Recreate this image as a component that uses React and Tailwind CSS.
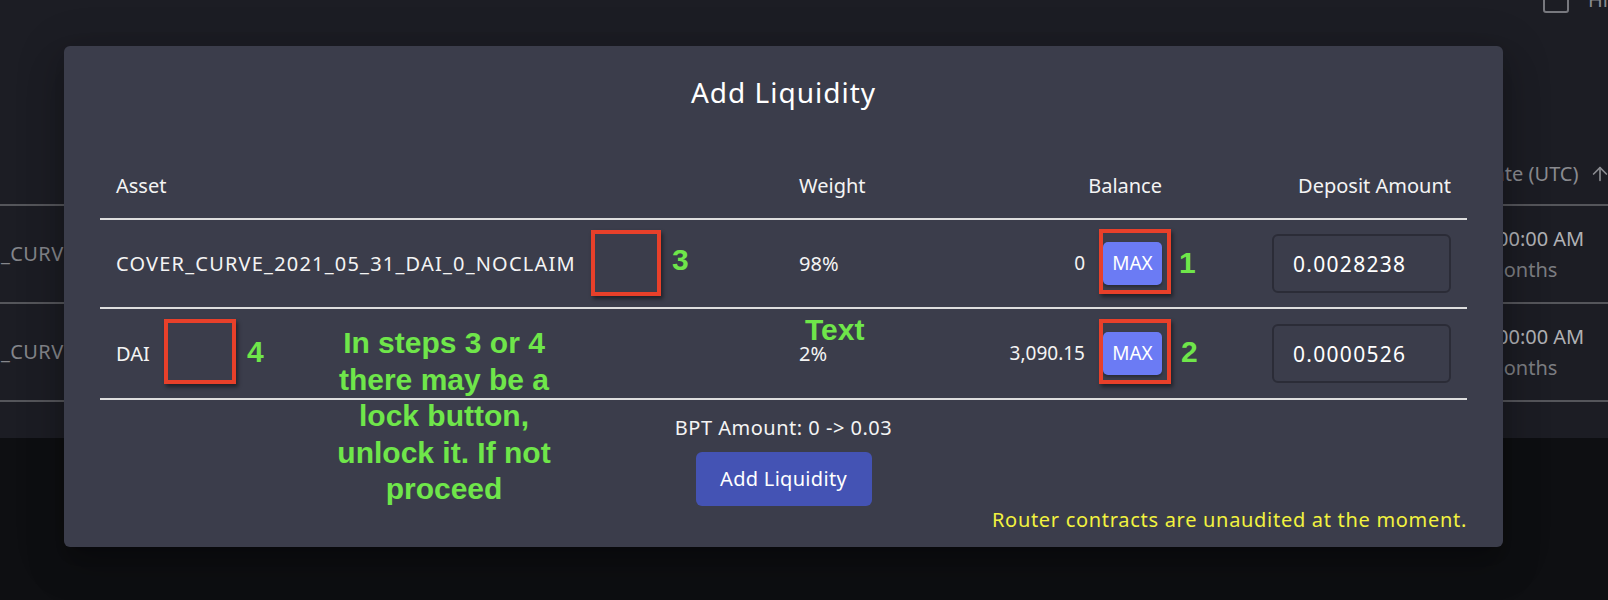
import React from 'react';
import { ArrowUp } from 'lucide-react';

const rows = [
  { asset: 'COVER_CURVE_2021_05_31_DAI_0_NOCLAIM', weight: '98%', balance: '0', amount: '0.0028238', h: 'h-[89px]', wide: true },
  { asset: 'DAI', weight: '2%', balance: '3,090.15', amount: '0.0000526', h: 'h-[91px]' },
];

const bgRows = ['_CURV', '_CURV'];

function Background() {
  return (
    <div className="h-[438px] bg-[#1c1d24]">
      <div className="flex h-[204px] flex-col">
        <div className="-mt-[13px] flex items-center justify-end gap-[19px]">
          <div className="h-[26px] w-[26px] rounded-[3px] border-2 border-[#77787e]" />
          <span className="w-[20px] overflow-hidden whitespace-nowrap text-[20px] leading-[26px] text-[#8a8b90]">Hide</span>
        </div>
        <div className="mt-auto grid grid-cols-[1479px_1fr] pb-[16px] text-[20px] leading-[28px] text-[#8a8b90]">
          <div />
          <div className="flex items-center gap-[10px] whitespace-nowrap">
            Date (UTC)
            <ArrowUp size={22} strokeWidth={1.8} />
          </div>
        </div>
      </div>
      {bgRows.map((r, i) => (
        <div key={i} className="grid h-[98px] grid-cols-[1479px_1fr] items-center border-t-2 border-[#55565b]">
          <div className="whitespace-nowrap pl-[1px] text-[20px] tracking-[0.4px] text-[#85868b]">{r}</div>
          <div className="text-[20px] leading-[31px] whitespace-nowrap">
            <div className="pl-[18px] text-[#b0b1b5]">00:00 AM</div>
            <div className="pl-[6px] text-[#7c7d82]">months</div>
          </div>
        </div>
      ))}
      <div className="border-t-2 border-[#55565b]" />
    </div>
  );
}

function Modal() {
  return (
    <div className="absolute left-[64px] top-[46px] flex h-[501px] w-[1439px] flex-col rounded-[6px] bg-[#3b3d4b] px-[36px] pt-[29px] text-[#f4f4f4] shadow-[0_11px_15px_-7px_rgba(0,0,0,0.2),0_24px_38px_3px_rgba(0,0,0,0.14),0_9px_46px_8px_rgba(0,0,0,0.12)]">
      <h2 className="h-[34px] text-center text-[28px] leading-[34px] tracking-[1px] text-white">Add Liquidity</h2>

      <div className="grid h-[111px] grid-cols-[683px_200px_195px_289px] items-end border-b-2 border-[#dedede] pb-[18px] text-[20px] leading-[28px]">
        <div className="pl-4">Asset</div>
        <div className="pl-4">Weight</div>
        <div className="pr-4 text-right">Balance</div>
        <div className="pr-4 text-right">Deposit Amount</div>
      </div>

      {rows.map((r) => (
        <div key={r.asset} className={`grid ${r.h} grid-cols-[683px_200px_195px_289px] items-center border-b-2 border-[#dedede] text-[20px]`}>
          <div className={`pl-4 whitespace-nowrap ${r.wide ? 'tracking-[1.2px]' : ''}`}>{r.asset}</div>
          <div className="pl-4">{r.weight}</div>
          <div className="flex items-center justify-end gap-[18px] pr-4">
            <span className="text-[19px]">{r.balance}</span>
            <button className="h-[43px] w-[59px] rounded-[5px] bg-[#6b7bf4] text-[19px] text-white shadow-[0_2px_3px_rgba(0,0,0,0.3)]">MAX</button>
          </div>
          <div className="flex justify-end pr-4">
            <input
              readOnly
              value={r.amount}
              className="h-[59px] w-[179px] rounded-[6px] border-2 border-[#2b2c37] bg-transparent pl-[19px] text-[21px] tracking-[1.3px] text-white outline-none"
            />
          </div>
        </div>
      ))}

      <p className="mt-[14px] text-center text-[20px] leading-[28px] tracking-[0.5px]">BPT Amount: 0 -&gt; 0.03</p>
      <button className="mx-auto mt-[10px] h-[54px] w-[176px] rounded-[6px] bg-[#4453b4] text-[20px] tracking-[0.3px] text-white">Add Liquidity</button>
      <p className="text-right text-[20px] leading-[28px] tracking-[0.7px] text-[#f2f23f]">Router contracts are unaudited at the moment.</p>
    </div>
  );
}

const boxes = [
  'left-[591px] top-[230px] w-[70px] h-[66px]',
  'left-[164px] top-[319px] w-[72px] h-[65px]',
  'left-[1099px] top-[229px] w-[72px] h-[65px]',
  'left-[1099px] top-[319px] w-[72px] h-[65px]',
];

const labels = [
  { t: '3', c: 'left-[672px] top-[242px]' },
  { t: '4', c: 'left-[247px] top-[334px]' },
  { t: '1', c: 'left-[1179px] top-[245px]' },
  { t: '2', c: 'left-[1181px] top-[334px]' },
  { t: 'Text', c: 'left-[805px] top-[312px]' },
];

function Annotations() {
  return (
    <div className="font-['Liberation_Sans',Arial,sans-serif] font-bold text-[30px] leading-[36px] text-[#6fe64a]">
      {boxes.map((b, i) => (
        <div key={i} className={`absolute ${b} border-[4px] border-[#e8402a] shadow-[2px_3px_4px_rgba(0,0,0,0.45)]`} />
      ))}
      {labels.map((l) => (
        <div key={l.t} className={`absolute ${l.c}`}>{l.t}</div>
      ))}
      <div className="absolute left-[334px] top-[325px] w-[220px] text-center leading-[36.5px] whitespace-nowrap">
        In steps 3 or 4<br />there may be a<br />lock button,<br />unlock it. If not<br />proceed
      </div>
    </div>
  );
}

export default function App() {
  return (
    <div className="relative h-[600px] w-[1608px] overflow-hidden bg-[#0e0f12] font-['Noto_Sans',sans-serif]">
      <Background />
      <Modal />
      <Annotations />
    </div>
  );
}
